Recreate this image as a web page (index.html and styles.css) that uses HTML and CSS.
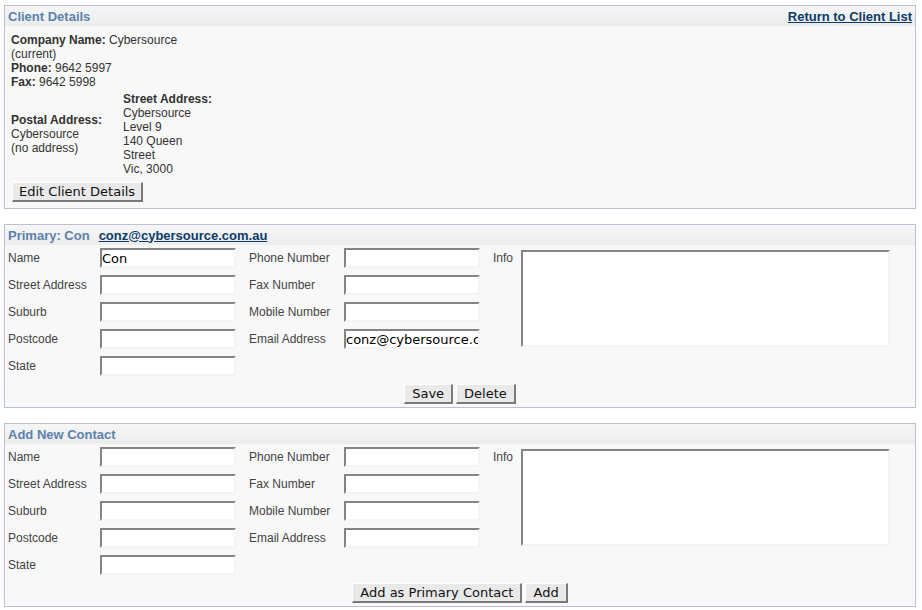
FILE: index.html
```html
<!DOCTYPE html>
<html>
<head>
<meta charset="utf-8">
<title>Client Details</title>
<link rel="stylesheet" href="styles.css">
</head>
<body>
<div class="panel">
  <div class="panel-head">
    <span class="title">Client Details</span>
    <a class="head-link" href="#">Return to Client List</a>
  </div>
  <div class="details">
    <div class="lines">
      <div><b>Company Name:</b> Cybersource</div>
      <div>(current)</div>
      <div><b>Phone:</b> 9642 5997</div>
      <div><b>Fax:</b> 9642 5998</div>
    </div>
    <div class="addresses">
      <div class="addr postal">
        <b>Postal Address:</b><br>Cybersource<br>(no address)
      </div>
      <div class="addr">
        <b>Street Address:</b><br>Cybersource<br>Level 9<br>140 Queen<br>Street<br>Vic, 3000
      </div>
    </div>
    <button class="btn">Edit Client Details</button>
  </div>
</div>

<div class="panel">
  <div class="panel-head">
    <span class="title">Primary: Con</span>
    <a class="head-link mail" href="#">conz@cybersource.com.au</a>
  </div>
  <div class="form">
    <div class="cols">
      <div class="grid g1">
        <label>Name</label><input type="text" value="Con">
        <label>Street Address</label><input type="text">
        <label>Suburb</label><input type="text">
        <label>Postcode</label><input type="text">
        <label>State</label><input type="text">
      </div>
      <div class="grid g2">
        <label>Phone Number</label><input type="text">
        <label>Fax Number</label><input type="text">
        <label>Mobile Number</label><input type="text">
        <label>Email Address</label><input type="text" value="conz@cybersource.com.au">
      </div>
      <div class="info">
        <label>Info</label><textarea></textarea>
      </div>
    </div>
    <div class="actions">
      <button class="btn">Save</button><button class="btn">Delete</button>
    </div>
  </div>
</div>

<div class="panel">
  <div class="panel-head">
    <span class="title">Add New Contact</span>
  </div>
  <div class="form">
    <div class="cols">
      <div class="grid g1">
        <label>Name</label><input type="text">
        <label>Street Address</label><input type="text">
        <label>Suburb</label><input type="text">
        <label>Postcode</label><input type="text">
        <label>State</label><input type="text">
      </div>
      <div class="grid g2">
        <label>Phone Number</label><input type="text">
        <label>Fax Number</label><input type="text">
        <label>Mobile Number</label><input type="text">
        <label>Email Address</label><input type="text">
      </div>
      <div class="info">
        <label>Info</label><textarea></textarea>
      </div>
    </div>
    <div class="actions">
      <button class="btn">Add as Primary Contact</button><button class="btn">Add</button>
    </div>
  </div>
</div>
</body>
</html>
```
FILE: styles.css
```css
html, body {
  background: #fff;
}
body {
  margin: 5px 6px 4px 4px;
  font-family: "Liberation Sans", Arial, sans-serif;
  font-size: 12px;
  color: #333;
}
.panel {
  border: 1px solid #b9c3cf;
  background: #f8f8f8;
  margin-bottom: 15px;
}
.panel-head {
  height: 20px;
  display: flex;
  align-items: center;
  padding: 0 3px;
  background: linear-gradient(#f6f6f6, #ececec);
  font-size: 13px;
  font-weight: bold;
}
.title {
  color: #5b82ad;
}
.head-link {
  color: #0b3b6b;
  margin-left: auto;
  text-decoration: underline;
}
.head-link.mail {
  margin-left: 9px;
}
.details {
  padding: 7px 6px 6px 6px;
  line-height: 14px;
}
.addresses {
  display: flex;
  align-items: center;
  margin-top: 3px;
}
.addr.postal {
  width: 112px;
}
.btn {
  font-family: "DejaVu Sans", sans-serif;
  font-size: 13px;
  color: #111;
  height: 20px;
  padding: 0 7px;
  background: #e9e9e9;
  border-width: 1px 2px 2px 1px;
  border-style: solid;
  border-color: #fff #7a7a7a #7a7a7a #fff;
  border-radius: 0;
  line-height: 15px;
}
.details .btn {
  margin-top: 6px;
  margin-left: 1px;
  padding: 0 6px;
}
.form {
  padding: 3px 3px 3px 3px;
}
.cols {
  display: flex;
  align-items: flex-start;
}
.grid {
  display: grid;
  row-gap: 7px;
  align-items: center;
}
.g1 {
  grid-template-columns: 92px 136px;
}
.g2 {
  grid-template-columns: 95px 136px;
  margin-left: 13px;
}
label {
  line-height: 20px;
  color: #444;
}
input, textarea {
  font-family: "DejaVu Sans", sans-serif;
  font-size: 13px;
  color: #000;
  background: #fff;
  box-sizing: border-box;
  border-width: 2px;
  border-style: solid;
  border-color: #848484 #f4f4f4 #f4f4f4 #848484;
  margin: 0;
  outline: none;
}
input {
  width: 136px;
  height: 20px;
  padding: 0;
}
.info {
  display: flex;
  align-items: flex-start;
  margin-left: 13px;
}
.info label {
  width: 28px;
}
textarea {
  width: 369px;
  height: 97px;
  margin-top: 2px;
  resize: none;
  padding: 2px;
}
.actions {
  display: flex;
  justify-content: center;
  gap: 3px;
  margin-top: 8px;
}
```
